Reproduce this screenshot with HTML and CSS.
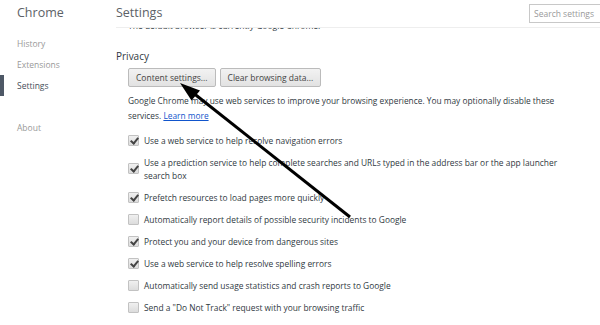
FILE: index.html
```html
<!DOCTYPE html>
<html lang="en">
<head>
    <meta charset="UTF-8" />
    <title>Settings</title>
    <link rel="stylesheet" href="styles.css">
</head>
<body>
    <div class="sidebar">
        <h1 class="brand">Chrome</h1>
        <ul class="nav">
            <li><a href="#">History</a></li>
            <li><a href="#">Extensions</a></li>
            <li class="active"><a href="#">Settings</a></li>
            <li class="nav-gap"><a href="#">About</a></li>
        </ul>
    </div>

    <div class="main">
        <header class="page-head">
            <h1 class="page-title">Settings</h1>
            <input type="text" class="search" placeholder="Search settings">
        </header>

        <div class="page-body">
            <p class="cut-line">The default browser is currently Google Chrome.</p>

            <section class="section">
                <h3 class="section-title">Privacy</h3>
                <div class="section-body">
                    <div class="btn-row">
                        <button type="button" class="btn">Content settings...</button>
                        <button type="button" class="btn">Clear browsing data...</button>
                    </div>
                    <p class="info">Google Chrome may use web services to improve your browsing experience. You may optionally disable these services. <a href="#" class="link">Learn more</a></p>

                    <label class="check-row"><span class="box checked"></span><span>Use a web service to help resolve navigation errors</span></label>
                    <label class="check-row"><span class="box checked"></span><span>Use a prediction service to help complete searches and URLs typed in the address bar or the app launcher search box</span></label>
                    <label class="check-row"><span class="box checked"></span><span>Prefetch resources to load pages more quickly</span></label>
                    <label class="check-row"><span class="box"></span><span>Automatically report details of possible security incidents to Google</span></label>
                    <label class="check-row"><span class="box checked"></span><span>Protect you and your device from dangerous sites</span></label>
                    <label class="check-row"><span class="box checked"></span><span>Use a web service to help resolve spelling errors</span></label>
                    <label class="check-row"><span class="box"></span><span>Automatically send usage statistics and crash reports to Google</span></label>
                    <label class="check-row"><span class="box"></span><span>Send a "Do Not Track" request with your browsing traffic</span></label>
                </div>
            </section>
        </div>
    </div>

    <!-- annotation arrow drawn over the page -->
    <svg class="arrow" width="600" height="325" viewBox="0 0 600 325">
        <line x1="350" y1="217" x2="192" y2="92" stroke="#000" stroke-width="3" />
        <polygon points="180,83 200,90.5 191.5,100.5" fill="#000" />
    </svg>
</body>
</html>
```

FILE: styles.css
```css
* {
    margin: 0;
    padding: 0;
    box-sizing: border-box;
}

html,
body {
    overflow: hidden;
}

body {
    width: 600px;
    height: 325px;
    display: flex;
    background: #fff;
    font-family: "Open Sans", "Noto Sans", sans-serif;
    font-size: 8.5px;
    color: #303942;
    position: relative;
}

.sidebar {
    width: 116px;
    flex-shrink: 0;
}

.brand {
    height: 27px;
    line-height: 25px;
    padding-left: 17px;
    font-size: 12.5px;
    font-weight: normal;
    color: #5c6166;
}

.nav {
    list-style: none;
    margin-top: 6px;
}

.nav li a {
    display: block;
    height: 21px;
    line-height: 21px;
    padding-left: 17px;
    color: #999;
    text-decoration: none;
}

.nav li.active a {
    border-left: 4px solid #4e5866;
    padding-left: 13px;
    color: #464e5a;
}

.nav li.nav-gap {
    margin-top: 21px;
}

.main {
    flex: 1;
    min-width: 0;
}

.page-head {
    height: 28px;
    display: flex;
    align-items: flex-start;
    border-bottom: 1px solid #eee;
    position: relative;
    z-index: 1;
    background: #fff;
}

.page-title {
    font-size: 12.5px;
    font-weight: normal;
    color: #5c6166;
    line-height: 25px;
}

.search {
    margin-left: auto;
    margin-right: -20px;
    margin-top: 4px;
    width: 91px;
    height: 19px;
    border: 1px solid #c8c8c8;
    padding: 0 4px;
    font-family: "Open Sans", sans-serif;
    font-size: 8.5px;
    color: #303942;
    outline: none;
}

.search::placeholder {
    color: #999;
}

.cut-line {
    margin-top: -8px;
    padding-left: 12px;
    line-height: 12px;
}

.section {
    margin-top: 17px;
}

.section-title {
    font-size: 10px;
    font-weight: normal;
    line-height: 14px;
    color: #303942;
}

.section-body {
    padding-left: 12px;
    padding-right: 20px;
}

.btn-row {
    display: flex;
    gap: 4px;
    margin-top: 5px;
}

.btn {
    height: 19px;
    padding: 0 7px;
    border: 1px solid #bbb;
    border-radius: 2px;
    background: linear-gradient(#f2f2f2, #e2e2e2);
    font-family: "Open Sans", sans-serif;
    font-size: 8.5px;
    color: #444;
}

.info {
    margin-top: 6px;
    margin-bottom: 6px;
    line-height: 15px;
    font-size: 8.35px;
}

.link {
    color: #15c;
}

.check-row {
    display: flex;
    align-items: center;
    gap: 5px;
    padding: 4.5px 0;
    line-height: 13px;
    font-size: 8.4px;
}

.box {
    width: 11px;
    height: 11px;
    flex-shrink: 0;
    border: 1px solid #c2c2c2;
    border-radius: 1px;
    background: linear-gradient(#f0f0f0, #dcdcdc);
    position: relative;
}

.box.checked::after {
    content: "";
    position: absolute;
    left: 3px;
    top: 0;
    width: 3px;
    height: 6px;
    border-right: 2px solid #444;
    border-bottom: 2px solid #444;
    transform: rotate(40deg);
}

.arrow {
    position: absolute;
    top: 0;
    left: 0;
    pointer-events: none;
    z-index: 2;
}
```
